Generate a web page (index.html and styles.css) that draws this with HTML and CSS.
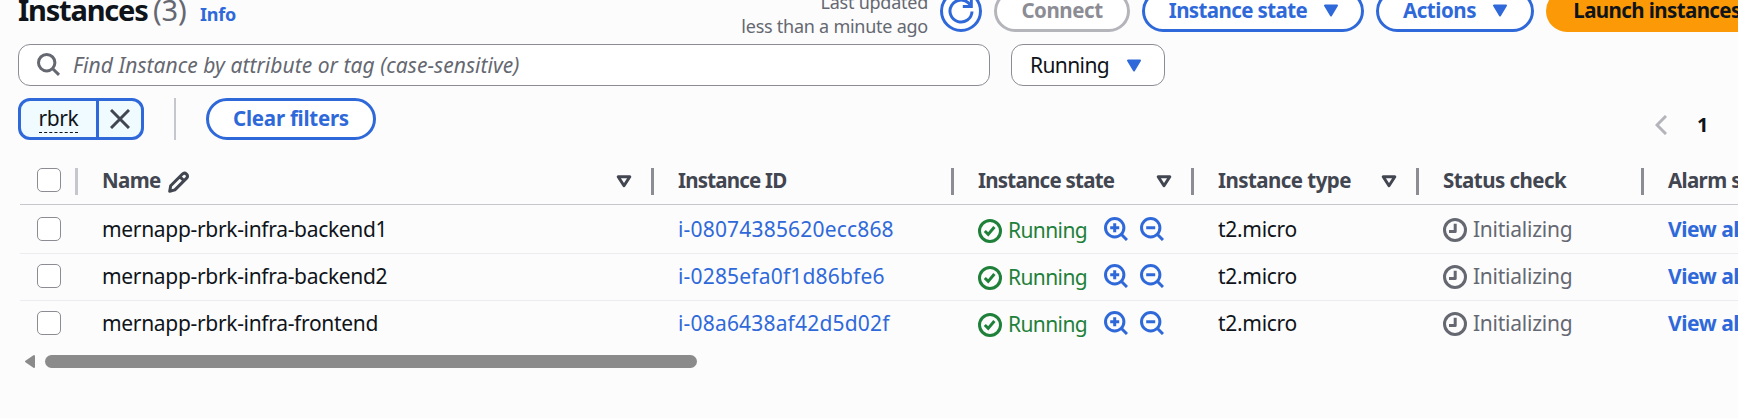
FILE: index.html
```html
<!DOCTYPE html>
<html lang="en">
<head>
<meta charset="utf-8">
<title>Instances</title>
<link rel="stylesheet" href="styles.css">
</head>
<body>
<svg class="defs" width="0" height="0">
  <symbol id="caret" viewBox="0 0 16 13"><path d="M2 1.5h12L8 11.5z" fill="currentColor" stroke="currentColor" stroke-width="2" stroke-linejoin="round"/></symbol>
  <symbol id="sort" viewBox="0 0 16 13"><path d="M2.2 1.8h11.6L8 10.7z" fill="none" stroke="currentColor" stroke-width="3" stroke-linejoin="round"/></symbol>
  <symbol id="ok" viewBox="0 0 24 24"><g fill="none" stroke="currentColor" stroke-width="3"><circle cx="12" cy="12" r="10.5"/><path d="M6.8 12l3.4 3.4 6.2-7.4"/></g></symbol>
  <symbol id="clock" viewBox="0 0 24 24"><g fill="none" stroke="currentColor" stroke-width="3"><circle cx="12" cy="12" r="10.5"/><path d="M12.2 5.8v7.7H6" stroke-linejoin="round"/></g></symbol>
  <symbol id="zin" viewBox="0 0 24 24"><g fill="none" stroke="currentColor" stroke-width="3"><circle cx="10.7" cy="10.7" r="9.2"/><path d="M17 17l6 6M10.7 6.2v9M6.2 10.7h9"/></g></symbol>
  <symbol id="zout" viewBox="0 0 24 24"><g fill="none" stroke="currentColor" stroke-width="3"><circle cx="10.7" cy="10.7" r="9.2"/><path d="M17 17l6 6M6.2 10.7h9"/></g></symbol>
</svg>
<main class="panel">
  <header class="header">
    <h1 class="title">Instances</h1><span class="count">(3)</span><a class="info">Info</a>
    <p class="updated">Last updated<br>less than a minute ago</p>
    <button class="btn refresh" aria-label="Refresh"><svg width="26" height="26" viewBox="0 0 26 26" fill="none" stroke="currentColor" stroke-width="3"><path d="M24 13.5a11 11 0 1 1-3.2-8.2L23.2 8"/><path d="M23.3 0v8.5h-8.5"/></svg></button>
    <button class="btn connect">Connect</button>
    <button class="btn state-btn">Instance state<svg class="caret"><use href="#caret"/></svg></button>
    <button class="btn actions">Actions<svg class="caret"><use href="#caret"/></svg></button>
    <button class="btn launch">Launch instances</button>
  </header>
  <div class="filters">
    <div class="search"><svg width="24" height="24" viewBox="0 0 24 24" fill="none" stroke="currentColor" stroke-width="3"><circle cx="9.7" cy="9.7" r="8.2"/><path d="M15.5 15.5l6.5 6.3"/></svg><span class="placeholder">Find Instance by attribute or tag (case-sensitive)</span></div>
    <div class="select"><span>Running</span><svg class="caret"><use href="#caret"/></svg></div>
  </div>
  <div class="tokens">
    <div class="token"><span class="token-label"><span class="token-text">rbrk</span></span><span class="token-x"><svg width="20" height="20" viewBox="0 0 20 20" stroke="currentColor" stroke-width="3"><path d="M1 1l18 18M19 1L1 19"/></svg></span></div>
    <span class="rule"></span>
    <button class="btn clear">Clear filters</button>
    <nav class="pager"><svg width="12" height="20" viewBox="0 0 12 20" fill="none" stroke="currentColor" stroke-width="3"><path d="M11 1L2 10l9 9"/></svg><span class="page">1</span></nav>
  </div>
  <section class="table">
    <div class="row head">
      <div class="cell pick"><span class="box"></span></div>
      <div class="cell"><span class="h-name">Name</span><svg class="pencil" width="22" height="22" viewBox="0 0 22 22" fill="none" stroke="currentColor" stroke-width="3" stroke-linejoin="round"><path d="M1.7 20.3l1-5.6L14.2 3.2c1.4-1.4 2.8-1.5 4.3-.1 1.4 1.4 1.300 2.800-.1 4.300L6.900 18.900zM11.800 5.600l4.400 4.400"/></svg><svg class="sort"><use href="#sort"/></svg></div>
      <div class="cell"><span class="h-id">Instance ID</span></div>
      <div class="cell"><span class="h-state">Instance state</span><svg class="sort"><use href="#sort"/></svg></div>
      <div class="cell"><span class="h-type">Instance type</span><svg class="sort"><use href="#sort"/></svg></div>
      <div class="cell"><span class="h-check">Status check</span></div>
      <div class="cell"><span class="h-alarm">Alarm status</span></div>
    </div>
    <div class="row first">
      <div class="cell pick"><span class="box"></span></div>
      <div class="cell name">mernapp-rbrk-infra-backend1</div>
      <div class="cell id">i-08074385620ecc868</div>
      <div class="cell"><svg class="ok"><use href="#ok"/></svg><span class="running">Running</span><svg class="zoom"><use href="#zin"/></svg><svg class="zoom"><use href="#zout"/></svg></div>
      <div class="cell type">t2.micro</div>
      <div class="cell"><svg class="clock"><use href="#clock"/></svg><span class="init">Initializing</span></div>
      <div class="cell view">View alarms</div>
    </div>
    <div class="row">
      <div class="cell pick"><span class="box"></span></div>
      <div class="cell name">mernapp-rbrk-infra-backend2</div>
      <div class="cell id">i-0285efa0f1d86bfe6</div>
      <div class="cell"><svg class="ok"><use href="#ok"/></svg><span class="running">Running</span><svg class="zoom"><use href="#zin"/></svg><svg class="zoom"><use href="#zout"/></svg></div>
      <div class="cell type">t2.micro</div>
      <div class="cell"><svg class="clock"><use href="#clock"/></svg><span class="init">Initializing</span></div>
      <div class="cell view">View alarms</div>
    </div>
    <div class="row last">
      <div class="cell pick"><span class="box"></span></div>
      <div class="cell name">mernapp-rbrk-infra-frontend</div>
      <div class="cell id">i-08a6438af42d5d02f</div>
      <div class="cell"><svg class="ok"><use href="#ok"/></svg><span class="running">Running</span><svg class="zoom"><use href="#zin"/></svg><svg class="zoom"><use href="#zout"/></svg></div>
      <div class="cell type">t2.micro</div>
      <div class="cell"><svg class="clock"><use href="#clock"/></svg><span class="init">Initializing</span></div>
      <div class="cell view">View alarms</div>
    </div>
  </section>
  <div class="scroll"><svg width="12" height="15" viewBox="0 0 12 15"><path d="M10 2v11L2 7.500z" fill="#8b8b8b" stroke="#8b8b8b" stroke-width="2" stroke-linejoin="round"/></svg><span class="thumb"></span></div>
</main>
</body>
</html>
```
FILE: styles.css
```css
* { box-sizing: border-box; }
html, body { height: 100%; overflow: hidden; }
body { margin: 0; background: #fcfcfd; color: #0f141a; font: 21px "Noto Sans", "Open Sans", sans-serif; letter-spacing: -0.45px; }
.defs { display: block; height: 0; }
svg { flex: none; }
.panel { width: 1738px; height: 418px; padding-left: 18px; overflow: hidden; }
.header { display: flex; align-items: center; width: 1720px; height: 42px; margin-top: -10px; white-space: nowrap; }
.title { margin: 0; width: 135px; font-size: 29px; line-height: 42px; letter-spacing: -1.2px; padding-bottom: 2px; }
.count { width: 47px; font-size: 29px; line-height: 42px; color: #656871; letter-spacing: -0.2px; padding-bottom: 2px; }
.info { width: 100px; font-size: 18px; font-weight: 700; color: #2f69d9; letter-spacing: -0.25px; padding-top: 5px; }
.updated { margin: 0 12px 0 auto; font-size: 18px; line-height: 24px; color: #656871; text-align: right; letter-spacing: -0.25px; padding-top: 5px; }
.btn { display: flex; flex: none; align-items: center; justify-content: center; height: 42px; padding: 0 0 2px; border: 3px solid #2f69d9; border-radius: 21px; background: #fff; color: #2f69d9; font: 700 20.5px "Noto Sans", "Open Sans", sans-serif; letter-spacing: -0.45px; white-space: nowrap; }
.refresh { width: 42px; padding: 0; margin-right: 12px; }
.connect { width: 136px; margin-right: 12px; border-color: #b4b4bb; color: #8c8c94; }
.state-btn { width: 222px; margin-right: 12px; letter-spacing: -0.6px; padding-left: 2px; }
.actions { width: 158px; margin-right: 12px; padding-left: 1px; }
.launch { width: 222px; border-color: #fb9a06; background: #fb9a06; color: #0f141a; margin-right: -30px; letter-spacing: -0.6px; }
.caret { width: 16px; height: 13px; margin-left: 17px; color: #2f69d9; }
.btn .caret { margin-left: 16px; }
.filters { display: flex; gap: 21px; margin-top: 12px; }
.search, .select { display: flex; align-items: center; height: 42px; border: 1px solid #8c8c94; border-radius: 12px; background: #fff; }
.search { width: 972px; padding-left: 18px; color: #656871; }
.placeholder { margin-left: 12px; padding-bottom: 1px; font-style: italic; letter-spacing: 0.04px; }
.select { width: 154px; padding-left: 18px; }
.select span { padding-bottom: 1px; letter-spacing: -0.6px; }
.tokens { display: flex; align-items: center; height: 42px; margin-top: 12px; }
.token { display: flex; width: 126px; height: 42px; border: 3px solid #2f69d9; border-radius: 12px; background: #f0fbff; overflow: hidden; }
.token-label { display: flex; align-items: center; justify-content: center; width: 78px; border-right: 3px solid #2f69d9; }
.token-text { height: 27px; line-height: 25px; border-bottom: 1px dashed #0f141a; letter-spacing: -0.4px; }
.token-x { display: flex; align-items: center; justify-content: center; flex: 1; color: #424650; }
.rule { width: 2px; height: 42px; margin: 0 30px; background: #c6c6cd; }
.clear { width: 170px; letter-spacing: -0.25px; }
.pager { display: flex; align-items: center; margin-left: 1279px; padding-top: 11px; color: #b4b4bb; }
.page { margin-left: 30px; color: #0f141a; font-weight: 700; font-size: 20px; line-height: 30px; }
.table { margin: 16px 0 0; }
.row { display: grid; grid-template-columns: 60px 576px 300px 240px 225px 225px 1fr; height: 47px; margin-left: 2px; padding-bottom: 2px; border-bottom: 1px solid #ebebf0; white-space: nowrap; }
.cell { display: flex; align-items: center; min-width: 0; padding-left: 22px; }
.cell.pick { padding-left: 17px; }
.head { height: 49px; padding-bottom: 0; border-color: #c6c6cd; color: #424650; font-weight: 700; font-size: 20.5px; letter-spacing: -0.65px; }
.head .cell { height: 27px; margin: 12px 2px 0 -2px; padding: 0 0 3px 24px; border-right: 3px solid #8c8c94; }
.head .cell:last-child { border-right: 0; }
.head .pick { border-color: #c6c6cd; padding-left: 19px; }
.box { flex: none; width: 24px; height: 24px; border: 1.5px solid #8c8c94; border-radius: 5px; background: #fff; }
.first { height: 49px; padding-bottom: 0; }
.last { padding-bottom: 3px; border-bottom: 0; }
.pencil { margin-left: 7px; margin-top: 4px; }
.sort { width: 16px; height: 13px; margin: 3px 19px 0 auto; }
.h-id { letter-spacing: -0.8px; }
.h-state { letter-spacing: -0.75px; }
.h-type, .h-check { letter-spacing: -0.55px; }
.name { letter-spacing: -0.32px; }
.id { color: #2f69d9; letter-spacing: 0.18px; }
.type { letter-spacing: -0.3px; }
.ok, .clock, .zoom { width: 24px; height: 24px; }
.ok { color: #1f8139; margin-top: 4px; }
.running { width: 78px; margin: 2px 18px 0 6px; color: #1f8139; letter-spacing: -0.6px; }
.zoom { color: #2f69d9; margin-right: 12px; }
.clock { color: #656871; margin-top: 2px; }
.init { margin-left: 6px; color: #656871; letter-spacing: -0.25px; }
.view { color: #2f69d9; font-weight: 700; }
.scroll { display: flex; align-items: center; margin: 6px 0 0 6px; }
.thumb { width: 652px; height: 13px; margin-left: 9px; border-radius: 7px; background: #8b8b8b; }
```
